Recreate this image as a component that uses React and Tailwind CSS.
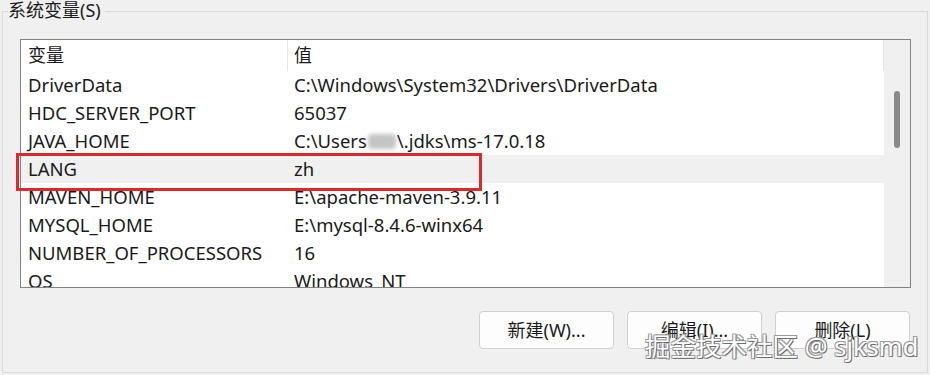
import React from "react";

const rows = [
  { name: "DriverData", value: "C:\\Windows\\System32\\Drivers\\DriverData" },
  { name: "HDC_SERVER_PORT", value: "65037" },
  { name: "JAVA_HOME", value: "java" },
  { name: "LANG", value: "zh", selected: true },
  { name: "MAVEN_HOME", value: "E:\\apache-maven-3.9.11" },
  { name: "MYSQL_HOME", value: "E:\\mysql-8.4.6-winx64" },
  { name: "NUMBER_OF_PROCESSORS", value: "16" },
  { name: "OS", value: "Windows_NT" },
];

const font = { fontFamily: '"Noto Sans", "Noto Sans CJK SC", sans-serif' };

const Value = ({ v }) => {
  if (v !== "java") return <span>{v}</span>;
  return (
    <span className="flex items-center">
      C:\Users
      <span className="inline-block w-[28px] h-[15px] bg-[#c4c4c4] rounded-sm blur-[2px] mx-[1px]" />
      \.jdks\ms-17.0.18
    </span>
  );
};

const Button = ({ children }) => (
  <button className="w-[135px] h-[38px] rounded-[4px] border border-[#d0d0d0] bg-[#fdfdfd] text-[18px] text-[#1a1a1a]">
    {children}
  </button>
);

export default function App() {
  return (
    <div
      className="w-[930px] h-[375px] bg-[#f0f0f0] relative overflow-hidden text-[#1a1a1a]"
      style={font}
    >
      <fieldset className="ml-[2px] w-[926px] border border-[#dadada]">
        <legend className="ml-[5px] h-[22px] leading-[20px] text-[18px] pr-[4px]">
          系统变量(S)
        </legend>

        <div className="ml-[17px] mt-[17px] w-[891px] h-[249px] border border-[#828282] bg-white flex overflow-hidden">
          <div className="flex-1 flex flex-col">
            <div className="h-[31px] shrink-0 flex text-[18px]">
              <div className="w-[267px] pl-[7px] flex items-center border-r border-[#e5e5e5]">
                变量
              </div>
              <div className="flex-1 pl-[6px] flex items-center border-r border-[#e5e5e5]">
                值
              </div>
            </div>
            {rows.map((r) => (
              <div
                key={r.name}
                className={
                  "h-[28px] shrink-0 flex items-center text-[18.5px] whitespace-nowrap " +
                  (r.selected ? "bg-[#f0f0f0]" : "")
                }
              >
                <div className="w-[266px] pl-[7px]">{r.name}</div>
                <div className="flex-1 pl-[7px]">
                  <Value v={r.value} />
                </div>
              </div>
            ))}
          </div>
          <div className="w-[26px] bg-[#f0f0f0] shrink-0 pt-[51px] pl-[10px]">
            <div className="w-[6px] h-[57px] rounded-full bg-[#8a8a8a]" />
          </div>
        </div>

        <div className="mt-[23px] mb-[23px] mr-[17px] flex justify-end gap-[13px]">
          <Button>新建(W)...</Button>
          <Button>编辑(I)...</Button>
          <Button>删除(L)</Button>
        </div>
      </fieldset>

      {/* highlight box around LANG row */}
      <div className="absolute left-[16px] top-[153px] w-[466px] h-[38px] border-[3px] border-[#d92b2f]" />

      {/* watermark */}
      <div className="absolute left-[645px] top-[327px] whitespace-nowrap text-[25.5px] text-white [text-shadow:1px_1px_0_#6b6b6b,-1px_-1px_0_#9a9a9a,1px_-1px_0_#9a9a9a,-1px_1px_0_#9a9a9a]">
        掘金技术社区 @ sjksmd
      </div>
    </div>
  );
}
